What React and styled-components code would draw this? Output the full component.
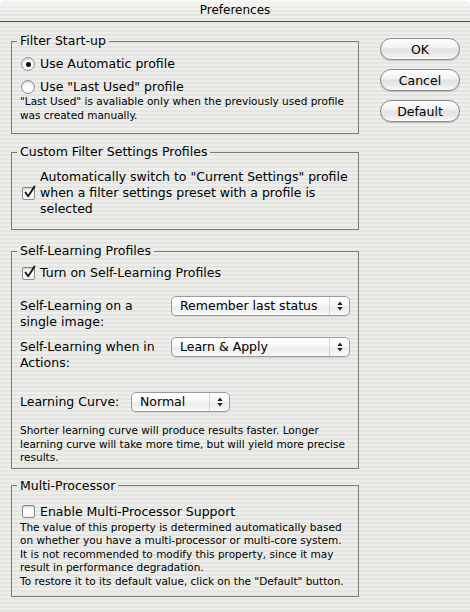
import styled, { createGlobalStyle } from 'styled-components';

const GlobalStyle = createGlobalStyle`
  html, body {
    margin: 0;
    padding: 0;
    background: #ffffff;
  }
  body {
    font-family: "DejaVu Sans", "Liberation Sans", sans-serif;
    color: #000;
  }
`;

const stripes = `repeating-linear-gradient(to bottom, #eeeeec 0, #eeeeec 2px, #e4e5e1 2px, #e4e5e1 4px)`;

const Window = styled.div`
  width: 470px;
  height: 612px;
  border-radius: 7px 7px 0 0;
  overflow: hidden;
  background: ${stripes};
  display: flex;
  flex-direction: column;
`;

const TitleBar = styled.div`
  height: 21px;
  flex: none;
  border-bottom: 1px solid #4a4a4a;
  background: linear-gradient(to bottom, rgba(255, 255, 255, 0.55), rgba(255, 255, 255, 0) 70%), ${stripes};
  display: flex;
  align-items: center;
  justify-content: center;
  font-size: 12px;
  line-height: 21px;
`;

const Body = styled.div`
  display: flex;
  align-items: flex-start;
  gap: 21px;
  padding: 11px 10px 0 11px;
`;

const Column = styled.div`
  width: 348px;
  display: flex;
  flex-direction: column;
`;

const Group = styled.fieldset`
  margin: ${p => p.$mt || 0}px 0 0 0;
  padding: ${p => p.$pad};
  border: 1px solid #7a7a7a;
  min-width: 0;
`;

const Legend = styled.legend`
  padding: 0 3px;
  margin-left: -3px;
  font-size: 12.5px;
  line-height: 16px;
`;

const OptionRow = styled.label`
  display: flex;
  align-items: center;
  gap: ${p => p.$gap || 5}px;
  font-size: 12.5px;
  line-height: 16px;
  margin-bottom: ${p => p.$mb || 0}px;
`;

const Radio = styled.span`
  flex: none;
  position: relative;
  width: 12px;
  height: 12px;
  margin-left: 1px;
  border-radius: 50%;
  border: 1px solid #909090;
  background: linear-gradient(to bottom, #f0f0f0, #ffffff 60%, #f4f4f4);
  box-shadow: inset 0 1px 1px rgba(0, 0, 0, 0.16);

  &::after {
    content: '';
    display: ${p => (p.$on ? 'block' : 'none')};
    position: absolute;
    left: 50%;
    top: 50%;
    width: 5px;
    height: 5px;
    margin: -2.5px 0 0 -2.5px;
    border-radius: 50%;
    background: #111;
  }
`;

const Box = styled.span`
  flex: none;
  position: relative;
  width: 11px;
  height: 11px;
  margin-left: 2px;
  border-radius: 2px;
  border: 1px solid #8a8a8a;
  background: linear-gradient(to bottom, #f0f0f0, #ffffff 60%, #f2f2f2);
  box-shadow: inset 0 1px 1px rgba(0, 0, 0, 0.15);

  svg {
    position: absolute;
    left: 0;
    top: -3px;
    overflow: visible;
  }
`;

const Check = ({ on }) => (
  <Box>
    {on && (
      <svg width="14" height="14" viewBox="0 0 14 14">
        <path d="M2.5 7.5 L5.2 11.2 L11.5 1.5" fill="none" stroke="#111" strokeWidth="1.8" strokeLinecap="round" strokeLinejoin="round" />
      </svg>
    )}
  </Box>
);

const Text = styled.div`
  font-size: 12.5px;
  line-height: 16px;
`;

const Note = styled.p`
  margin: ${p => p.$mt || 0}px 0 0 0;
  font-size: 10.5px;
  line-height: 13.5px;
`;

const SettingRow = styled.div`
  display: flex;
  align-items: flex-start;
  margin-top: ${p => p.$mt || 0}px;
`;

const SettingLabel = styled.div`
  width: ${p => p.$w}px;
  flex: none;
  padding-top: 2px;
  font-size: 12.5px;
  line-height: 16px;
`;

const Popup = styled.div`
  width: ${p => p.$w}px;
  height: 20px;
  box-sizing: border-box;
  flex: none;
  display: flex;
  align-items: stretch;
  border: 1px solid #9c9c9c;
  border-radius: 5px;
  background: linear-gradient(to bottom, #ffffff, #f6f6f6 50%, #ececec 55%, #f8f8f8);
  box-shadow: 0 1px 1px rgba(0, 0, 0, 0.12);
  font-size: 12.5px;
`;

const PopupValue = styled.span`
  flex: 1;
  padding-left: 8px;
  line-height: 18px;
`;

const PopupArrows = styled.span`
  width: 19px;
  flex: none;
  border-left: 1px solid #d2d2d2;
  display: flex;
  align-items: center;
  justify-content: center;
`;

const Arrows = () => (
  <svg width="6" height="10" viewBox="0 0 6 10">
    <path d="M3 0.5 L5.6 4 L0.4 4 Z" fill="#222" />
    <path d="M3 9.5 L5.6 6 L0.4 6 Z" fill="#222" />
  </svg>
);

const Select = ({ value, width }) => (
  <Popup $w={width}>
    <PopupValue>{value}</PopupValue>
    <PopupArrows>
      <Arrows />
    </PopupArrows>
  </Popup>
);

const Buttons = styled.div`
  display: flex;
  flex-direction: column;
  gap: 9px;
  margin-top: 5px;
`;

const Button = styled.button`
  width: 80px;
  height: 22px;
  padding: 0;
  border: 1px solid #8b8b8b;
  border-radius: 11px;
  background: linear-gradient(to bottom, #fefefe 0%, #f3f3f3 40%, #e2e2e2 52%, #ececec 80%, #fbfbfb 100%);
  box-shadow: 0 1px 1px rgba(0, 0, 0, 0.18);
  font-family: "DejaVu Sans", "Liberation Sans", sans-serif;
  font-size: 12.5px;
  color: #000;
`;

export default function App() {
  return (
    <>
      <GlobalStyle />
      <Window>
        <TitleBar>Preferences</TitleBar>
        <Body>
          <Column>
            <Group $pad="7px 3px 11px 8px">
              <Legend>Filter Start-up</Legend>
              <OptionRow $mb={7}>
                <Radio $on />
                Use Automatic profile
              </OptionRow>
              <OptionRow>
                <Radio />
                Use "Last Used" profile
              </OptionRow>
              <Note>
                "Last Used" is avaliable only when the previously used profile was created manually.
              </Note>
            </Group>

            <Group $mt={10} $pad="9px 2px 12px 8px">
              <Legend>Custom Filter Settings Profiles</Legend>
              <OptionRow $gap={5}>
                <Check on />
                <Text>Automatically switch to "Current Settings" profile when a filter settings preset with a profile is selected</Text>
              </OptionRow>
            </Group>

            <Group $mt={13} $pad="6px 3px 3px 8px">
              <Legend>Self-Learning Profiles</Legend>
              <OptionRow>
                <Check on />
                Turn on Self-Learning Profiles
              </OptionRow>
              <SettingRow $mt={15}>
                <SettingLabel $w={151}>Self-Learning on a single image:</SettingLabel>
                <Select value="Remember last status" width={179} />
              </SettingRow>
              <SettingRow $mt={7}>
                <SettingLabel $w={151}>Self-Learning when in Actions:</SettingLabel>
                <Select value="Learn & Apply" width={179} />
              </SettingRow>
              <SettingRow $mt={21}>
                <SettingLabel $w={111}>Learning Curve:</SettingLabel>
                <Select value="Normal" width={99} />
              </SettingRow>
              <Note $mt={12}>
                Shorter learning curve will produce results faster. Longer learning curve will take more time, but will yield more precise results.
              </Note>
            </Group>

            <Group $mt={9} $pad="10px 6px 8px 8px">
              <Legend>Multi-Processor</Legend>
              <OptionRow>
                <Check />
                Enable Multi-Processor Support
              </OptionRow>
              <Note $mt={1}>
                The value of this property is determined automatically based on whether you have a multi-processor or multi-core system. It is not recommended to modify this property, since it may result in performance degradation.
                <br />
                To restore it to its default value, click on the "Default" button.
              </Note>
            </Group>
          </Column>

          <Buttons>
            <Button>OK</Button>
            <Button>Cancel</Button>
            <Button>Default</Button>
          </Buttons>
        </Body>
      </Window>
    </>
  );
}
